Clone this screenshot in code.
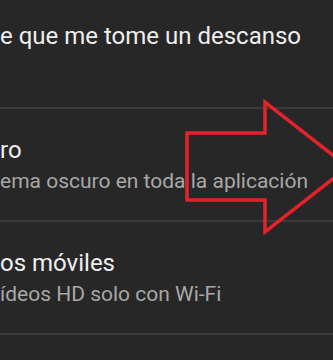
import React from 'react';

const rows = [
  { title: 'ro', subtitle: 'ema oscuro en toda la aplicación' },
  { title: 'os móviles', subtitle: 'ídeos HD solo con Wi-Fi' },
];

export default function App() {
  return (
    <div
      className="relative w-[333px] h-[360px] overflow-hidden bg-[#272727]"
      style={{ fontFamily: 'Roboto, "Noto Sans", sans-serif' }}
    >
      <div className="h-[107px] pt-[22px]">
        <p className="whitespace-nowrap text-[24px] leading-[28px] text-[#eeeeee]">
          e que me tome un descanso
        </p>
      </div>
      <div className="h-[2px] bg-[#3a3a3a]" />

      {rows.map((row) => (
        <div key={row.title}>
          <div className="h-[111px] pt-[27px]">
            <p className="whitespace-nowrap text-[24px] leading-[28px] text-[#eeeeee]">{row.title}</p>
            <p className="mt-[5px] whitespace-nowrap text-[21px] leading-[24px] text-[#a8a8a8]">
              {row.subtitle}
            </p>
          </div>
          <div className="h-[2px] bg-[#3a3a3a]" />
        </div>
      ))}

      {/* red arrow annotation drawn over the screenshot */}
      <svg className="absolute left-0 top-0" width="333" height="360" viewBox="0 0 333 360">
        <polygon
          points="187,133 265,133 265,102 348,167 265,232 265,200 187,200"
          fill="none"
          stroke="#e3222c"
          strokeWidth="3.5"
          strokeLinejoin="miter"
        />
      </svg>
    </div>
  );
}
